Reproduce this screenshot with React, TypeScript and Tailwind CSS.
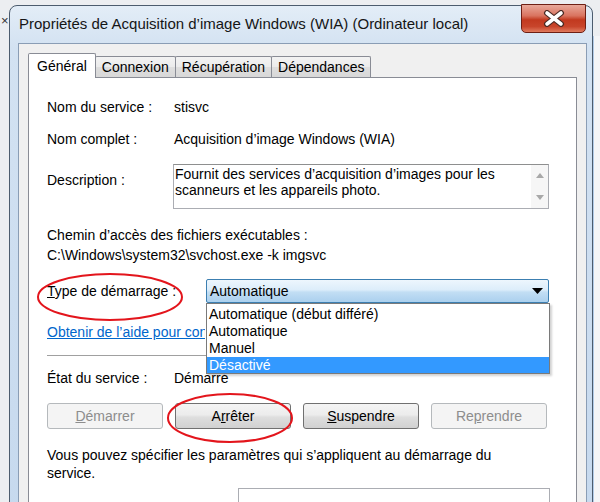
const FONT = "font-['Liberation_Sans',Arial,sans-serif]";

function CloseButton() {
  return (
    <div className="absolute right-[6px] top-[-2px] w-[65px] h-[29px] rounded-b-[5px] border border-[#6e1f14] bg-[linear-gradient(to_bottom,#e9a89a_0%,#d9735f_40%,#c2391f_55%,#c8452b_80%,#e07b5f_100%)] flex items-center justify-center">
      <svg width="24" height="17" viewBox="0 0 24 17">
        <path d="M5 3 L19 14 M19 3 L5 14" stroke="#4a2a24" strokeWidth="6" strokeLinecap="round" />
        <path d="M5 3 L19 14 M19 3 L5 14" stroke="#ffffff" strokeWidth="3.6" strokeLinecap="round" />
      </svg>
    </div>
  );
}

function Tab({ label, active }: { label: string; active?: boolean }) {
  if (active) {
    return (
      <div className="relative z-10 h-[25px] -mb-px px-[8px] pt-[3px] bg-white border border-b-0 border-[#898c95] rounded-t-[2px] leading-[18px]">
        {label}
      </div>
    );
  }
  return (
    <div className="h-[21px] -ml-px px-[6px] pt-[1px] border border-b-0 border-[#898c95] rounded-t-[2px] bg-[linear-gradient(to_bottom,#f3f3f3_0%,#ebebeb_50%,#dedede_50%,#d8d8d8_100%)] leading-[18px]">
      {label}
    </div>
  );
}

function Button({ children, disabled }: { children: React.ReactNode; disabled?: boolean }) {
  return disabled ? (
    <div className="w-[116px] h-[26px] rounded-[3px] border border-[#b5b9bc] bg-[#f4f4f4] text-[#8d8d8d] flex items-center justify-center">
      {children}
    </div>
  ) : (
    <div className="w-[116px] h-[26px] rounded-[3px] border border-[#707070] bg-[linear-gradient(to_bottom,#f4f4f4_0%,#ececec_45%,#dedede_55%,#d1d1d1_100%)] flex items-center justify-center">
      {children}
    </div>
  );
}

export default function App() {
  return (
    <div className={`relative w-[600px] h-[502px] overflow-hidden bg-[#eceef1] pl-[9px] pt-[5px] text-[14px] text-black ${FONT}`}>
      {/* bits of the desktop behind */}
      <div className="absolute left-[1px] top-[14px] text-[13px] text-[#333] leading-none">×</div>
      <div className="absolute right-[6px] top-[36px] w-[3px] h-[466px] bg-[#b3cce8]" />
      <div className="absolute right-0 top-[36px] w-[6px] h-[466px] bg-[#f4f5f7]" />

      <div className="relative w-[584px] h-[520px] rounded-t-[8px] border border-[#4c5c6e] bg-[linear-gradient(to_bottom,#e3edf7_0%,#d3e2f2_8%,#c6d9ee_100%)] flex flex-col">
        <div className="h-[37px] flex items-center pl-[9px] text-[15px] text-[#151515]">
          Propriétés de Acquisition d’image Windows (WIA) (Ordinateur local)
        </div>
        <CloseButton />

        <div className="ml-[8px] mr-[5px] flex-1 border border-[#8a9db5] bg-[#f0f0f0] pt-[9px] px-[9px] flex flex-col">
          <div className="flex items-end h-[24px]">
            <Tab label="Général" active />
            <Tab label="Connexion" />
            <Tab label="Récupération" />
            <Tab label="Dépendances" />
          </div>

          <div className="flex-1 bg-white border border-[#898c95] pl-[18px] pr-[27px] flex flex-col">
            <div className="mt-[20px] flex leading-[18px]">
              <div className="w-[126px]">Nom du service :</div>
              <div className="pl-[1px]">stisvc</div>
            </div>
            <div className="mt-[14px] flex leading-[18px]">
              <div className="w-[126px]">Nom complet :</div>
              <div className="pl-[1px]">Acquisition d’image Windows (WIA)</div>
            </div>
            <div className="mt-[16px] flex">
              <div className="w-[126px] pt-[7px] leading-[18px]">Description :</div>
              <div className="w-[376px] h-[45px] border border-[#abadb3] border-t-[#8e8f8f] flex">
                <div className="flex-1 pl-[1px] pt-[1px] leading-[16px]">
                  Fournit des services d’acquisition d’images pour les
                  <br />
                  scanneurs et les appareils photo.
                </div>
                <div className="w-[17px] bg-[#f6f6f6] flex flex-col items-center justify-between py-[8px]">
                  <svg width="8" height="5" viewBox="0 0 8 5">
                    <path d="M0 5 L4 0 L8 5 Z" fill="#a8a8a8" />
                  </svg>
                  <svg width="8" height="5" viewBox="0 0 8 5">
                    <path d="M0 0 L8 0 L4 5 Z" fill="#a8a8a8" />
                  </svg>
                </div>
              </div>
            </div>

            <div className="mt-[17px] leading-[18px]">Chemin d’accès des fichiers exécutables :</div>
            <div className="mt-[2px] leading-[18px]">C:\Windows\system32\svchost.exe -k imgsvc</div>

            <div className="mt-[15px] flex items-center">
              <div className="w-[159px] leading-[18px]">
                <span className="underline">T</span>ype de démarrage :
              </div>
              <div className="relative w-[343px] h-[24px] rounded-[2px] border border-[#3c7fb1] bg-[linear-gradient(to_bottom,#edf6fd_0%,#dcedfa_45%,#c2def4_55%,#abd0ee_100%)] flex items-center pl-[3px]">
                <span className="flex-1">Automatique</span>
                <svg className="mr-[5px]" width="11" height="6" viewBox="0 0 11 6">
                  <path d="M0 0 L11 0 L5.5 6 Z" fill="#000" />
                </svg>
                <div className="absolute left-[-1px] top-[23px] z-20 w-[344px] h-[71px] border border-[#7a7a7a] bg-white pt-[2px] shadow-[2px_2px_2px_rgba(0,0,0,0.18)]">
                  <div className="h-[17px] leading-[17px] pl-[2px]">Automatique (début différé)</div>
                  <div className="h-[17px] leading-[17px] pl-[2px]">Automatique</div>
                  <div className="h-[17px] leading-[17px] pl-[2px]">Manuel</div>
                  <div className="h-[16px] leading-[16px] pl-[2px] bg-[#3399ff] text-white">Désactivé</div>
                </div>
              </div>
            </div>

            <div className="mt-[20px] w-[158px] overflow-hidden leading-[18px] text-[#0066cc] underline whitespace-nowrap">
              Obtenir de l’aide pour configurer les options de démarrage du service.
            </div>

            <div className="mt-[14px] w-[502px] border-t border-[#a0a0a0]" />

            <div className="mt-[13px] flex leading-[18px]">
              <div className="w-[126px]">État du service :</div>
              <div className="pl-[1px]">Démarré</div>
            </div>

            <div className="mt-[16px] flex gap-[12px]">
              <Button disabled>
                <span className="underline">D</span>émarrer
              </Button>
              <Button>
                A<span className="underline">r</span>rêter
              </Button>
              <Button>
                <span className="underline">S</span>uspendre
              </Button>
              <Button disabled>
                Re<span className="underline">p</span>rendre
              </Button>
            </div>

            <div className="mt-[17px] leading-[18px]">
              Vous pouvez spécifier les paramètres qui s’appliquent au démarrage du
              <br />
              service.
            </div>

            <div className="mt-[6px] ml-[191px] w-[312px] h-[24px] border border-[#abadb3] bg-white" />
          </div>
        </div>
      </div>

      {/* red annotation circles */}
      <svg className="absolute left-0 top-0 pointer-events-none" width="600" height="502">
        <ellipse cx="110" cy="297" rx="72" ry="23" fill="none" stroke="#e3151c" strokeWidth="2" />
        <ellipse cx="230" cy="418" rx="62" ry="24" fill="none" stroke="#e3151c" strokeWidth="2" />
      </svg>
    </div>
  );
}
